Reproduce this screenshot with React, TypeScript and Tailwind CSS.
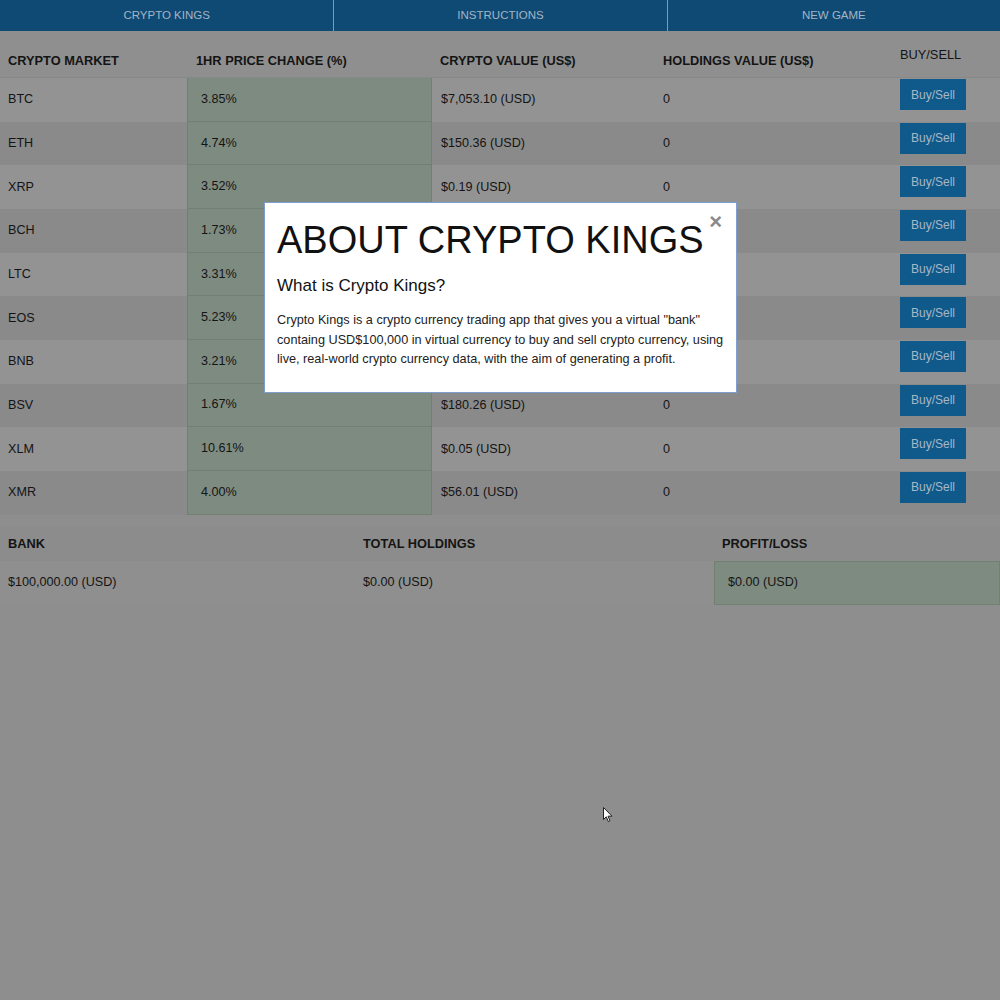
import React from 'react';

interface Coin {
    symbol: string;
    change: string;
    value: string;
    holdings: string;
}

// rows BCH..BNB sit under the modal, their value columns aren't visible
const coins: Coin[] = [
    { symbol: 'BTC', change: '3.85%', value: '$7,053.10 (USD)', holdings: '0' },
    { symbol: 'ETH', change: '4.74%', value: '$150.36 (USD)', holdings: '0' },
    { symbol: 'XRP', change: '3.52%', value: '$0.19 (USD)', holdings: '0' },
    { symbol: 'BCH', change: '1.73%', value: '', holdings: '' },
    { symbol: 'LTC', change: '3.31%', value: '', holdings: '' },
    { symbol: 'EOS', change: '5.23%', value: '', holdings: '' },
    { symbol: 'BNB', change: '3.21%', value: '', holdings: '' },
    { symbol: 'BSV', change: '1.67%', value: '$180.26 (USD)', holdings: '0' },
    { symbol: 'XLM', change: '10.61%', value: '$0.05 (USD)', holdings: '0' },
    { symbol: 'XMR', change: '4.00%', value: '$56.01 (USD)', holdings: '0' },
];

const cols = 'grid grid-cols-[187px_245px_223px_236px_1fr]';

const App: React.FC = () => {
    return (
        <div
            className="relative min-h-screen w-full bg-[#8e8e8e] text-[#141414]"
            style={{ fontFamily: '"Liberation Sans", Arial, sans-serif' }}
        >
            {/* nav */}
            <nav className="grid grid-cols-3 h-[31px] bg-[#0f4a74] text-[11.5px] text-[#a3b5c4] uppercase">
                <div className="flex items-center justify-center">Crypto Kings</div>
                <div className="flex items-center justify-center border-l border-[#7f9bb1]">Instructions</div>
                <div className="flex items-center justify-center border-l border-[#7f9bb1]">New Game</div>
            </nav>

            {/* market table */}
            <div className="mt-[9px]">
                <div className={`${cols} h-[38px] text-[12.8px] font-bold bg-[#8f8f8f] border-b border-[#888]`}>
                    <div className="flex items-center pl-[8px] pt-[4px]">CRYPTO MARKET</div>
                    <div className="flex items-center pl-[9px] pt-[4px]">1HR PRICE CHANGE (%)</div>
                    <div className="flex items-center pl-[8px] pt-[4px]">CRYPTO VALUE (US$)</div>
                    <div className="flex items-center pl-[8px] pt-[4px]">HOLDINGS VALUE (US$)</div>
                    <div className="pl-[9px] pt-[5px] font-normal">BUY/SELL</div>
                </div>
                {coins.map((c, i) => (
                    <div
                        key={c.symbol}
                        className={`${cols} h-[43.67px] text-[12.6px] ${i % 2 === 0 ? 'bg-[#939393]' : 'bg-[#8a8a8a]'}`}
                    >
                        <div className="flex items-center pl-[8px]">{c.symbol}</div>
                        <div className="flex items-center pl-[13px] bg-[#7e8b80] border-x border-b border-[#728074]">
                            {c.change}
                        </div>
                        <div className="flex items-center pl-[9px]">{c.value}</div>
                        <div className="flex items-center pl-[8px]">{c.holdings}</div>
                        <div className="flex items-start pt-[1px] pl-[9px]">
                            <button className="w-[66px] h-[31px] bg-[#105a8b] text-[#a6b7c6] text-[12px]">
                                Buy/Sell
                            </button>
                        </div>
                    </div>
                ))}
            </div>

            {/* bank summary */}
            <div className="mt-[11px]">
                <div className="grid grid-cols-[355px_359px_1fr] h-[35px] pt-[2px] text-[12.8px] font-bold bg-[#8c8c8c]">
                    <div className="flex items-center pl-[8px]">BANK</div>
                    <div className="flex items-center pl-[8px]">TOTAL HOLDINGS</div>
                    <div className="flex items-center pl-[8px]">PROFIT/LOSS</div>
                </div>
                <div className="grid grid-cols-[355px_359px_1fr] h-[44px] text-[12.6px] bg-[#8f8f8f]">
                    <div className="flex items-center pl-[8px]">$100,000.00 (USD)</div>
                    <div className="flex items-center pl-[8px]">$0.00 (USD)</div>
                    <div className="flex items-center pl-[13px] bg-[#7e8b80] border border-[#728074]">$0.00 (USD)</div>
                </div>
            </div>

            {/* about modal */}
            <div className="absolute left-[264px] top-[202px] w-[473px] h-[191px] bg-white border border-[#7f9fcf] px-[12px] text-[#111]">
                <button className="absolute right-[14px] top-[8px] text-[22px] leading-none font-bold text-[#8a8a8a]">
                    ×
                </button>
                <h1 className="text-[38px] leading-[42px] mt-[16px]">ABOUT CRYPTO KINGS</h1>
                <h2 className="text-[17px] leading-[20px] mt-[15px]">What is Crypto Kings?</h2>
                <p className="text-[12.7px] leading-[19.5px] mt-[15px] text-[#222]">
                    Crypto Kings is a crypto currency trading app that gives you a virtual "bank" containg
                    USD$100,000 in virtual currency to buy and sell crypto currency, using live, real-world
                    crypto currency data, with the aim of generating a profit.
                </p>
            </div>

            {/* mouse pointer */}
            <svg className="absolute left-[603px] top-[807px]" width="10" height="16" viewBox="0 0 10 16">
                <path d="M0.5 0.5 L0.5 12.5 L3.3 9.8 L5.3 14.5 L7 13.8 L5 9.2 L9 9.2 Z" fill="#fff" stroke="#222" strokeWidth="1" />
            </svg>
        </div>
    );
};

export default App;
